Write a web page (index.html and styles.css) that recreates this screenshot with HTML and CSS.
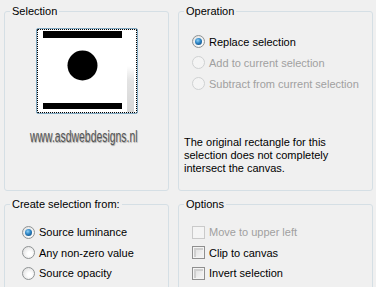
FILE: index.html
```html
<!DOCTYPE html>
<html lang="en">
<head>
    <meta charset="UTF-8">
    <title>Selection from Mask</title>
    <link rel="stylesheet" href="styles.css">
</head>
<body>

<div class="dialog">

    <!-- Preview -->
    <fieldset class="group">
        <legend>Selection</legend>
        <div class="preview">
            <svg width="98" height="82" viewBox="0 0 98 82">
                <defs>
                    <linearGradient id="strip" x1="0" y1="0" x2="0" y2="1">
                        <stop offset="0" stop-color="#ffffff"/>
                        <stop offset="0.3" stop-color="#e4e4e4"/>
                        <stop offset="1" stop-color="#d6d6d6"/>
                    </linearGradient>
                </defs>
                <rect x="0" y="0" width="98" height="82" fill="#fff"/>
                <rect x="89" y="36" width="7" height="46" fill="url(#strip)"/>
                <rect x="5" y="1" width="79" height="7" fill="#000"/>
                <circle cx="44.5" cy="35.5" r="15" fill="#000"/>
                <rect x="5" y="73" width="79" height="6" fill="#000"/>
            </svg>
        </div>
        <div class="watermark"><span>www.asdwebdesigns.nl</span></div>
    </fieldset>

    <!-- Operation -->
    <fieldset class="group">
        <legend>Operation</legend>
        <div class="choices op-choices">
            <label class="choice"><span class="radio checked"></span>Replace selection</label>
            <label class="choice disabled"><span class="radio"></span>Add to current selection</label>
            <label class="choice disabled"><span class="radio"></span>Subtract from current selection</label>
        </div>
        <p class="note">The original rectangle for this selection does not completely intersect the canvas.</p>
    </fieldset>

    <!-- Source -->
    <fieldset class="group">
        <legend>Create selection from:</legend>
        <div class="choices src-choices">
            <label class="choice"><span class="radio checked"></span>Source luminance</label>
            <label class="choice"><span class="radio"></span>Any non-zero value</label>
            <label class="choice"><span class="radio"></span>Source opacity</label>
        </div>
    </fieldset>

    <!-- Options -->
    <fieldset class="group">
        <legend>Options</legend>
        <div class="choices opt-choices">
            <label class="choice disabled"><span class="check"></span>Move to upper left</label>
            <label class="choice"><span class="check"></span>Clip to canvas</label>
            <label class="choice"><span class="check"></span>Invert selection</label>
        </div>
    </fieldset>

</div>

</body>
</html>
```

FILE: styles.css
```css
/* General Page Styles */
body {
    margin: 0;
    background: #f0f0f0;
    font-family: 'Liberation Sans', Arial, sans-serif;
    font-size: 11px;
    color: #000;
    overflow: hidden;
}

.dialog {
    display: grid;
    grid-template-columns: 165px 195px;
    grid-template-rows: 187px 100px;
    column-gap: 9px;
    row-gap: 6px;
    padding: 4px;
}

/* Group boxes */
.group {
    box-sizing: border-box;
    margin: 0;
    padding: 0;
    min-width: 0;
    border: 1px solid #d5dfe5;
    border-radius: 3px;
}

.group legend {
    margin-left: 5px;
    padding: 0 2px;
    line-height: 14px;
}

/* Preview */
.preview {
    width: 98px;
    height: 82px;
    margin: 11px auto 0;
    border: 1px dotted #000;
    outline: 1px solid #7fa7c0;
    border-radius: 1px;
}

.preview svg {
    display: block;
}

.watermark {
    margin-top: 15px;
    text-align: center;
    font-family: 'Liberation Sans', sans-serif;
    font-size: 16px;
    line-height: 18px;
    color: #555;
    text-shadow: 1px 1px 1px rgba(0, 0, 0, 0.3);
}

.watermark span {
    display: inline-block;
    transform: scaleX(0.65);
    margin-left: -5px;
}

/* Radio and check rows */
.choices {
    display: flex;
    flex-direction: column;
}

.op-choices {
    padding: 13px 0 0 13px;
}

.src-choices {
    padding: 11px 0 0 17px;
}

.opt-choices {
    padding: 11px 0 0 13px;
}

.choice {
    display: flex;
    align-items: center;
    gap: 4px;
    height: 21px;
}

.src-choices .choice,
.opt-choices .choice {
    height: 20.5px;
}

.choice.disabled {
    color: #a0a0a0;
}

.radio {
    box-sizing: border-box;
    width: 13px;
    height: 13px;
    border-radius: 50%;
    border: 1px solid #8f9394;
    background: radial-gradient(circle at 60% 60%, #ffffff 20%, #e2e2e2 80%);
    display: flex;
    align-items: center;
    justify-content: center;
}

.radio.checked::after {
    content: "";
    width: 7px;
    height: 7px;
    border-radius: 50%;
    background: radial-gradient(circle at 40% 35%, #8fd0f5 0%, #2b83c4 45%, #0d3c69 100%);
}

.disabled .radio {
    border-color: #cfd1d2;
    background: #f4f4f4;
}

.check {
    box-sizing: border-box;
    width: 13px;
    height: 13px;
    border: 1px solid #8f8f8f;
    background: #fff;
    box-shadow: inset 0 0 0 1px #f4f4f4, inset 1px 1px 0 2px #cfcfcf;
    background-image: linear-gradient(135deg, #dcdcdc, #f8f8f8);
    background-clip: content-box;
    padding: 2px;
}

.disabled .check {
    border-color: #cacaca;
    background: #f4f4f4;
    box-shadow: none;
}

/* Note text */
.note {
    margin: 42px 0 0 5px;
    line-height: 13px;
    width: 180px;
}
```
